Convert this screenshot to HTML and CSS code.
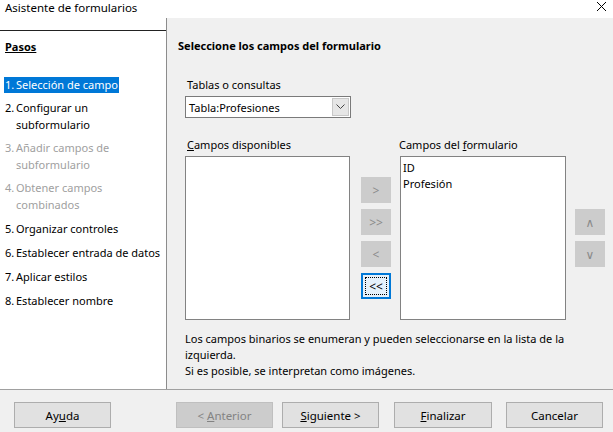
FILE: index.html
```html
<!DOCTYPE html>
<html lang="es">
  <head>
    <meta charset="UTF-8" />
    <title>Asistente de formularios</title>
    <link rel="stylesheet" href="styles.css">
  </head>
  <body>
    <div class="window">
      <div class="titlebar">
        <span class="title">Asistente de formularios</span>
        <svg class="close" width="11" height="11" viewBox="0 0 11 11">
          <path d="M1 1 L10 10 M10 1 L1 10" stroke="#000" stroke-width="1" fill="none" />
        </svg>
      </div>

      <div class="main">
        <!-- Steps -->
        <div class="steps">
          <div class="steps-rule"></div>
          <div class="steps-head">Pasos</div>
          <ul class="step-list">
            <li class="step"><span class="active"><span class="num">1.</span>Selección de campo</span></li>
            <li class="step"><span class="num">2.</span><span class="text">Configurar un subformulario</span></li>
            <li class="step disabled"><span class="num">3.</span><span class="text">Añadir campos de subformulario</span></li>
            <li class="step disabled"><span class="num">4.</span><span class="text">Obtener campos combinados</span></li>
            <li class="step"><span class="num">5.</span><span class="text">Organizar controles</span></li>
            <li class="step"><span class="num">6.</span><span class="text">Establecer entrada de datos</span></li>
            <li class="step"><span class="num">7.</span><span class="text">Aplicar estilos</span></li>
            <li class="step"><span class="num">8.</span><span class="text">Establecer nombre</span></li>
          </ul>
        </div>

        <!-- Page -->
        <div class="page">
          <div class="page-title">Seleccione los campos del formulario</div>
          <div class="form">
            <div class="label">Tablas o consultas</div>
            <div class="combo">
              <span class="combo-text">Tabla:Profesiones</span>
              <span class="combo-btn">
                <svg width="9" height="6" viewBox="0 0 9 6">
                  <path d="M0.5 0.5 L4.5 4.5 L8.5 0.5" stroke="#444" stroke-width="1" fill="none" />
                </svg>
              </span>
            </div>

            <div class="lists-labels">
              <div class="label left-label"><u>C</u>ampos disponibles</div>
              <div class="label right-label">Campos del <u>f</u>ormulario</div>
            </div>

            <div class="lists">
              <div class="listbox"></div>
              <div class="move-buttons">
                <button class="small-btn" disabled>&gt;</button>
                <button class="small-btn" disabled>&gt;&gt;</button>
                <button class="small-btn" disabled>&lt;</button>
                <button class="small-btn focused"><span>&lt;&lt;</span></button>
              </div>
              <div class="listbox fields">
                <div>ID</div>
                <div>Profesión</div>
              </div>
              <div class="order-buttons">
                <button class="small-btn" disabled>&and;</button>
                <button class="small-btn" disabled>&or;</button>
              </div>
            </div>

            <p class="note">Los campos binarios se enumeran y pueden seleccionarse en la lista de la izquierda.<br>Si es posible, se interpretan como imágenes.</p>
          </div>
        </div>
      </div>

      <div class="footer">
        <button class="btn help">Ay<u>u</u>da</button>
        <button class="btn prev" disabled>&lt; <u>A</u>nterior</button>
        <button class="btn next"><u>S</u>iguiente &gt;</button>
        <button class="btn finish"><u>F</u>inalizar</button>
        <button class="btn cancel">Cancelar</button>
      </div>
    </div>
  </body>
</html>
```

FILE: styles.css
```css
* {
  box-sizing: border-box;
}

body {
  margin: 0;
  font-family: "Noto Sans", "DejaVu Sans", sans-serif;
  font-size: 11px;
  color: #000;
  background-color: #f0f0f0;
}

.window {
  width: 613px;
  height: 432px;
  display: flex;
  flex-direction: column;
  overflow: hidden;
}

.titlebar {
  height: 18px;
  background-color: #fff;
  display: flex;
  justify-content: space-between;
  align-items: flex-start;
  padding: 0 6px 0 5px;
}

.title {
  font-size: 11.5px;
  line-height: 15px;
}

.close {
  margin-top: 1px;
}

.main {
  height: 372px;
  display: flex;
  border-bottom: 1px solid #a0a0a0;
}

/* left steps column */
.steps {
  width: 167px;
  background-color: #fff;
  border-right: 1px solid #8c8c8c;
}

.steps-rule {
  height: 13px;
  border-bottom: 1px solid #222;
}

.steps-head {
  margin: 8px 0 0 5px;
  font-weight: bold;
  text-decoration: underline;
  line-height: 16px;
}

.step-list {
  list-style: none;
  margin: 22px 0 0 0;
  padding: 0 0 0 4px;
  display: flex;
  flex-direction: column;
  gap: 6px;
}

.step {
  display: flex;
  line-height: 17px;
}

.step:nth-child(n+5) {
  margin-top: 1px;
}

.step .num {
  display: inline-block;
  width: 12px;
  flex: none;
  padding-left: 1px;
}

.step .text {
  max-width: 146px;
}

.step .active {
  background-color: #0078d7;
  color: #fff;
  line-height: 16px;
  padding-right: 1px;
}

.step.disabled {
  color: #a0a0a0;
}

/* right page */
.page {
  flex: 1;
  padding: 20px 0 0 11px;
}

.page-title {
  font-weight: bold;
  line-height: 16px;
}

.form {
  margin-left: 7px;
}

.label {
  line-height: 16px;
  padding-left: 2px;
}

.form > .label {
  margin-top: 23px;
}

.combo {
  margin-top: 3px;
  width: 166px;
  height: 22px;
  border: 1px solid #7a7a7a;
  background-color: #fff;
  display: flex;
  align-items: center;
  justify-content: space-between;
  padding: 1px;
}

.combo-text {
  padding-left: 2px;
}

.combo-btn {
  width: 17px;
  height: 18px;
  background-color: #e6e6e6;
  border: 1px solid #c8c8c8;
  display: flex;
  align-items: center;
  justify-content: center;
}

.lists-labels {
  display: flex;
  margin-top: 19px;
}

.left-label {
  width: 214px;
}

.right-label {
  padding-left: 0;
}

.lists {
  display: flex;
  align-items: flex-start;
  margin-top: 3px;
}

.listbox {
  width: 165px;
  height: 164px;
  background-color: #fff;
  border: 1px solid #828282;
}

.fields {
  width: 166px;
  padding: 3px 0 0 2px;
  line-height: 16px;
}

.move-buttons,
.order-buttons {
  display: flex;
  flex-direction: column;
  gap: 6px;
}

.move-buttons {
  margin: 21px 9px 0 11px;
}

.order-buttons {
  margin: 53px 0 0 9px;
}

.small-btn {
  width: 30px;
  height: 26px;
  padding: 0;
  font-family: inherit;
  font-size: 12px;
  color: #000;
  background-color: #e1e1e1;
  border: 1px solid #adadad;
}

.small-btn:disabled {
  color: #8a8a8a;
  background-color: #cccccc;
  border-color: #cccccc;
}

.small-btn.focused {
  background-color: #e5f1fb;
  border: 2px solid #0078d7;
  padding: 2px;
}

.small-btn.focused span {
  display: flex;
  height: 100%;
  align-items: center;
  justify-content: center;
  border: 1px dotted #000;
}

.note {
  margin: 11px 0 0 0;
  width: 400px;
  line-height: 16px;
}

/* bottom buttons */
.footer {
  flex: 1;
  display: flex;
  align-items: flex-start;
  padding: 12px 0 0 14px;
}

.btn {
  width: 97px;
  height: 26px;
  padding: 0;
  font-family: inherit;
  font-size: 11.5px;
  color: #000;
  background-color: #e1e1e1;
  border: 1px solid #adadad;
}

.btn:disabled {
  color: #838383;
  background-color: #cccccc;
  border-color: #bfbfbf;
}

.prev {
  margin-left: 65px;
}

.next {
  margin-left: 9px;
}

.finish {
  margin-left: 15px;
  width: 98px;
}

.cancel {
  margin-left: 14px;
}
```
